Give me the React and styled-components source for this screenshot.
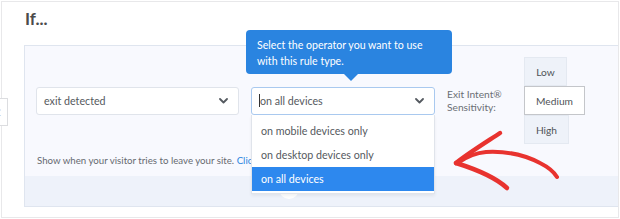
import styled, { createGlobalStyle } from 'styled-components';

const Global = createGlobalStyle`
  html, body {
    margin: 0;
    padding: 0;
    background: #ffffff;
    font-family: Lato, "Open Sans", sans-serif;
  }
`;

const Page = styled.div`
  position: relative;
  width: 620px;
  height: 219px;
  padding: 1px 0 0 1px;
  box-sizing: border-box;
  overflow: hidden;
`;

const Card = styled.div`
  width: 618px;
  height: 217px;
  box-sizing: border-box;
  border: 1px solid #e8e8ea;
  padding: 7px 0 0 22px;
`;

const Title = styled.h2`
  margin: 0 0 16px 1px;
  font-size: 17px;
  line-height: 20px;
  font-weight: 700;
  color: #4b4b4b;
`;

const Panel = styled.div`
  position: relative;
  height: 162px;
  box-sizing: border-box;
  border: 1px solid #dfe5ef;
  border-right: none;
  background: #f8f9fe;
  display: flex;
  flex-direction: column;
`;

const RuleRow = styled.div`
  display: flex;
  align-items: center;
  padding: 11px 0 0 11px;
`;

const SelectWrap = styled.div`
  position: relative;
  margin-right: 12px;
`;

const Select = styled.div`
  width: ${(p) => p.$width}px;
  height: 28px;
  box-sizing: border-box;
  border: 1px solid ${(p) => (p.$focused ? '#a9c9ef' : '#e0e4eb')};
  border-radius: 3px;
  background: #ffffff;
  display: flex;
  align-items: center;
  justify-content: space-between;
  padding: 0 10px 0 7px;
  font-size: 10.7px;
  color: #555a60;
`;

const Caret = styled.span`
  display: inline-block;
  width: 1px;
  height: 13px;
  background: #333;
  vertical-align: middle;
  margin-top: -2px;
`;

const Tooltip = styled.div`
  position: absolute;
  left: -5px;
  bottom: calc(100% + 13px);
  width: 206px;
  height: 44px;
  box-sizing: border-box;
  padding: 7px 11px 0;
  background: #2a84e0;
  color: #ffffff;
  border-radius: 4px;
  font-size: 10.6px;
  line-height: 16px;

  &::after {
    content: '';
    position: absolute;
    left: 98px;
    top: 100%;
    border: 7px solid transparent;
    border-top: 7px solid #2a84e0;
    border-bottom: none;
  }
`;

const Menu = styled.ul`
  position: absolute;
  left: 0;
  top: 100%;
  z-index: 2;
  width: 184px;
  box-sizing: border-box;
  margin: 0;
  padding: 4px 0 2px;
  list-style: none;
  background: #ffffff;
  border: 1px solid #e0e4eb;
  border-top: none;
  box-shadow: 0 2px 3px rgba(0, 0, 0, 0.06);
`;

const MenuItem = styled.li`
  height: 24px;
  line-height: 24px;
  padding: 0 9px;
  font-size: 10.7px;
  color: ${(p) => (p.$active ? '#ffffff' : '#555a60')};
  background: ${(p) => (p.$active ? '#2d88ee' : 'transparent')};
`;

const Label = styled.div`
  width: 77px;
  font-size: 10.2px;
  line-height: 13px;
  color: #6b6f75;
`;

const Levels = styled.div`
  display: flex;
  flex-direction: column;
  align-items: flex-start;
`;

const Level = styled.div`
  width: ${(p) => p.$width}px;
  height: 29px;
  box-sizing: border-box;
  display: flex;
  align-items: center;
  justify-content: center;
  font-size: 10.2px;
  color: #4f5358;
  background: ${(p) => (p.$active ? '#ffffff' : '#eef2f9')};
  border: 1px solid ${(p) => (p.$active ? '#c4c6ca' : '#e4e9f1')};
`;

const Hint = styled.p`
  margin: 9px 0 0 12px;
  font-size: 9.7px;
  line-height: 14px;
  color: #666a70;

  a {
    color: #2a84e0;
    text-decoration: none;
  }
`;

const Band = styled.div`
  position: relative;
  margin-top: auto;
  height: 30px;
  background: #eef2fa;
`;

const Connector = styled.div`
  position: absolute;
  left: 254px;
  top: 3px;
  width: 20px;
  height: 20px;
  border-radius: 50%;
  background: #ffffff;
`;

const Handle = styled.div`
  position: absolute;
  left: -10px;
  top: 98px;
  width: 18px;
  height: 28px;
  box-sizing: border-box;
  border: 1px solid #dcdde0;
  background: #ffffff;
  display: flex;
  align-items: center;
  justify-content: flex-end;
  padding-right: 6px;
  font-size: 9px;
  color: #b0b3b8;
`;

const Overlay = styled.svg`
  position: absolute;
  left: 0;
  top: 0;
  pointer-events: none;
  z-index: 3;
`;

const Chevron = () => (
  <svg width="9" height="6" viewBox="0 0 9 6">
    <path d="M1 1 L4.5 4.5 L8 1" fill="none" stroke="#555a60" strokeWidth="1.8" strokeLinecap="round" strokeLinejoin="round" />
  </svg>
);

const options = ['on mobile devices only', 'on desktop devices only', 'on all devices'];

const App = () => {
  return (
    <Page>
      <Global />
      <Card>
        <Title>If...</Title>
        <Panel>
          <RuleRow>
            <SelectWrap>
              <Select $width={203}>
                <span>exit detected</span>
                <Chevron />
              </Select>
            </SelectWrap>
            <SelectWrap>
              <Tooltip>
                Select the operator you want to use
                <br />
                with this rule type.
              </Tooltip>
              <Select $width={184} $focused>
                <span>
                  <Caret />
                  on all devices
                </span>
                <Chevron />
              </Select>
              <Menu>
                {options.map((o) => (
                  <MenuItem key={o} $active={o === 'on all devices'}>
                    {o}
                  </MenuItem>
                ))}
              </Menu>
            </SelectWrap>
            <Label>
              Exit Intent®
              <br />
              Sensitivity:
            </Label>
            <Levels>
              <Level $width={43}>Low</Level>
              <Level $width={61} $active>
                Medium
              </Level>
              <Level $width={45}>High</Level>
            </Levels>
          </RuleRow>
          <Hint>
            Show when your visitor tries to leave your site. <a href="#">Click here</a>
          </Hint>
          <Band>
            <Connector />
          </Band>
        </Panel>
      </Card>
      <Handle>⁚</Handle>
      <Overlay width="620" height="219" viewBox="0 0 620 219">
        <g fill="none" stroke="#e8332f" strokeLinecap="round" strokeLinejoin="round">
          <path d="M500 133 C488 141 470 152 456 163" strokeWidth="4.5" />
          <path d="M456 163 C472 168 494 176 507 188" strokeWidth="4.5" />
          <path d="M459 162 C468 156 476 153 486 152 C505 151 525 155 540 163 C548 167 554 172 557 177" strokeWidth="4" />
        </g>
      </Overlay>
    </Page>
  );
};

export default App;
